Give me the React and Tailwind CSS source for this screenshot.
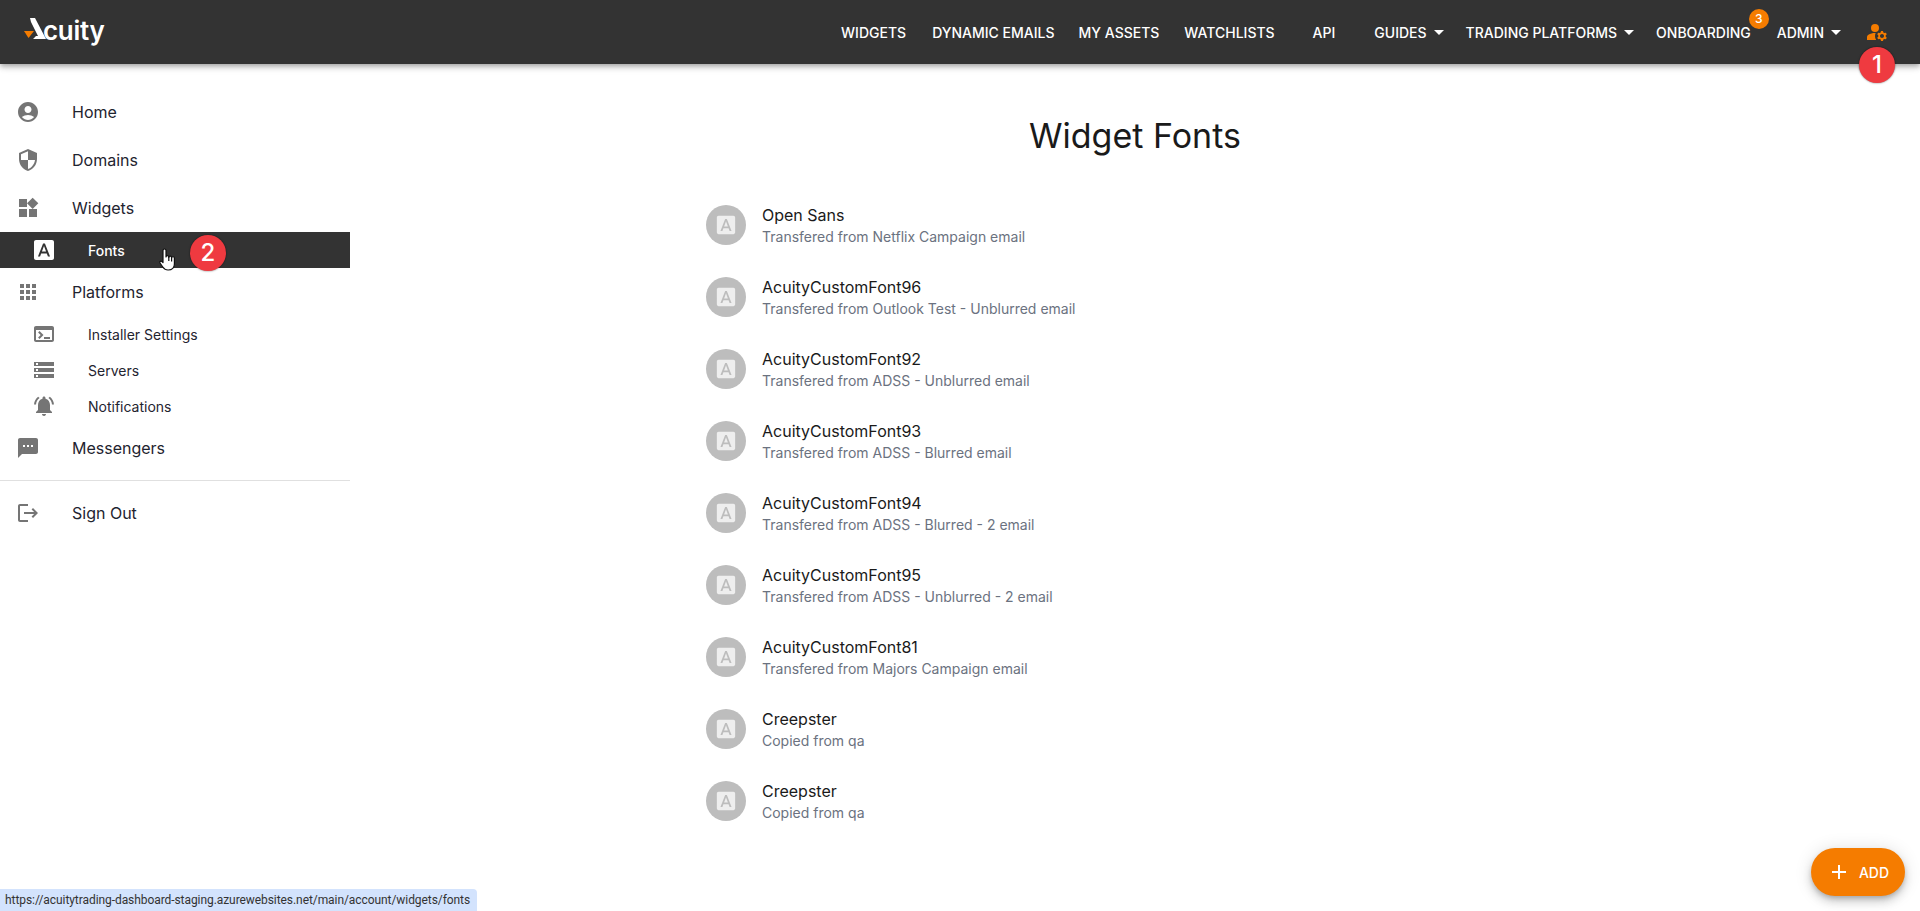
import React from "react";

const ICONS = {
  home: "M12 2C6.48 2 2 6.48 2 12s4.48 10 10 10 10-4.48 10-10S17.52 2 12 2zm0 4c1.93 0 3.5 1.57 3.5 3.5S13.93 13 12 13s-3.5-1.57-3.5-3.5S10.07 6 12 6zm0 14c-2.03 0-4.43-.82-6.14-2.88C7.55 15.8 9.68 15 12 15s4.45.8 6.14 2.12C16.43 19.18 14.03 20 12 20z",
  shield: "M12 1 3 5v6c0 5.55 3.84 10.74 9 12 5.16-1.26 9-6.45 9-12V5l-9-4zm0 10.99h7c-.53 4.12-3.28 7.79-7 8.94V12H5V6.3l7-3.11v8.8z",
  widgets: "M13 13v8h8v-8h-8zM3 21h8v-8H3v8zM3 3v8h8V3H3zm13.66-1.31L11 7.34 16.66 13l5.66-5.66-5.66-5.65z",
  font: "M9.93 13.5h4.14L12 7.98zM20 2H4c-1.1 0-2 .9-2 2v16c0 1.1.9 2 2 2h16c1.1 0 2-.9 2-2V4c0-1.1-.9-2-2-2zm-4.05 16.5l-1.14-3H9.17l-1.12 3H5.96l5.11-13h1.86l5.11 13h-2.09z",
  apps: "M4 8h4V4H4v4zm6 12h4v-4h-4v4zm-6 0h4v-4H4v4zm0-6h4v-4H4v4zm6 0h4v-4h-4v4zm6-10v4h4V4h-4zm-6 4h4V4h-4v4zm6 6h4v-4h-4v4zm0 6h4v-4h-4v4z",
  terminal: "M20 4H4c-1.11 0-2 .9-2 2v12c0 1.1.89 2 2 2h16c1.1 0 2-.9 2-2V6c0-1.1-.89-2-2-2zm0 14H4V8h16v10zm-2-1h-6v-2h6v2zM7.5 17l-1.41-1.41L8.67 13l-2.59-2.59L7.5 9l4 4-4 4z",
  storage: "M2 20h20v-4H2v4zm2-3h2v2H4v-2zM2 4v4h20V4H2zm4 3H4V5h2v2zm-4 7h20v-4H2v4zm2-3h2v2H4v-2z",
  bell: "M7.58 4.08 6.15 2.65C3.75 4.48 2.17 7.3 2.03 10.5h2c.15-2.65 1.51-4.97 3.55-6.42zm12.39 6.42h2c-.15-3.2-1.73-6.02-4.12-7.85l-1.42 1.43c2.02 1.45 3.39 3.77 3.54 6.42zM18 11c0-3.07-1.64-5.64-4.5-6.32V4c0-.83-.67-1.5-1.5-1.5s-1.5.67-1.5 1.5v.68C7.63 5.36 6 7.92 6 11v5l-2 2v1h16v-1l-2-2v-5zm-6 11c.14 0 .27-.01.4-.04.65-.14 1.18-.58 1.44-1.18.1-.24.15-.5.15-.78h-4c.01 1.1.9 2 2.01 2z",
  sms: "M20 2H4c-1.1 0-1.99.9-1.99 2L2 22l4-4h14c1.1 0 2-.9 2-2V4c0-1.1-.9-2-2-2zM9 11H7V9h2v2zm4 0h-2V9h2v2zm4 0h-2V9h2v2z",
  logout: "m17 7-1.41 1.41L18.17 11H8v2h10.17l-2.58 2.58L17 17l5-5zM4 5h8V3H4c-1.1 0-2 .9-2 2v14c0 1.1.9 2 2 2h8v-2H4V5z",
  add: "M19 13h-6v6h-2v-6H5v-2h6V5h2v6h6v2z",
};

function Icon({ name, className }) {
  return (
    <svg viewBox="0 0 24 24" fill="currentColor" className={className}>
      <path d={ICONS[name]} />
    </svg>
  );
}

function ManageAccounts({ className }) {
  return (
    <svg viewBox="0 0 24 24" fill="currentColor" className={className}>
      <path d="M10.67 13.02c-.22-.01-.44-.02-.67-.02-2.42 0-4.68.67-6.61 1.82-.88.52-1.39 1.5-1.39 2.53V20h9.26c-.79-1.13-1.26-2.51-1.26-4 0-1.07.25-2.07.67-2.98z" />
      <circle cx="10" cy="8" r="4" />
      <path d="M20.75 16c0-.22-.03-.42-.06-.63l1.14-1.01-1-1.73-1.45.49c-.32-.27-.68-.48-1.08-.63L18 11h-2l-.3 1.49c-.4.15-.76.36-1.08.63l-1.45-.49-1 1.73 1.14 1.01c-.03.21-.06.41-.06.63s.03.42.06.63l-1.14 1.01 1 1.73 1.45-.49c.32.27.68.48 1.08.63L16 21h2l.3-1.49c.4-.15.76-.36 1.08-.63l1.45.49 1-1.73-1.14-1.01c.03-.21.06-.41.06-.63zM17 18c-1.1 0-2-.9-2-2s.9-2 2-2 2 .9 2 2-.9 2-2 2z" />
    </svg>
  );
}

// mouse pointer sitting over the Fonts row
function HandCursor({ className }) {
  return (
    <svg viewBox="0 0 18 24" className={className} fill="#ffffff" stroke="#111111" strokeWidth="1.2" strokeLinejoin="round">
      <path d="M4 2.5a1.5 1.5 0 0 1 3 0V9a1.4 1.4 0 0 1 2.8 0v.5a1.4 1.4 0 0 1 2.8 0v.5a1.4 1.4 0 0 1 2.8 0V16c0 3.5-2.5 6-6 6H9c-2.5 0-4-1.2-5.2-3L1 15c-.7-1 .6-2.4 1.6-1.6L4 14.6z" />
      <path d="M9.8 9v4M12.6 10v3.5" fill="none" />
    </svg>
  );
}

function Caret() {
  return <span className="ml-[7px] w-0 h-0 border-x-[5px] border-x-transparent border-t-[5px] border-t-white" />;
}

function Callout({ children, className }) {
  return (
    <div className={`absolute w-9 h-9 rounded-full bg-[#ef3a40] text-white text-[24px] font-medium flex items-center justify-center shadow-[0_0_2px_rgba(0,0,0,0.6)] ${className}`}>
      {children}
    </div>
  );
}

function NavItem({ label, caret, className = "" }) {
  return (
    <div className={`flex items-center text-[14px] font-medium text-white uppercase whitespace-nowrap ${className}`}>
      {label}
      {caret && <Caret />}
    </div>
  );
}

function TopRow({ icon, label }) {
  return (
    <div className="h-12 flex items-center pl-4 text-[16px] text-[#1f2430]">
      <Icon name={icon} className="w-6 h-6 mr-8 text-[#757575]" />
      {label}
    </div>
  );
}

function SubRow({ icon, label, active }) {
  return (
    <div className={`h-9 flex items-center pl-8 text-[14px] ${active ? "bg-[#333333] text-white font-medium" : "text-[#1f2430]"}`}>
      <Icon name={icon} className={`w-6 h-6 mr-8 ${active ? "text-white" : "text-[#757575]"}`} />
      {label}
    </div>
  );
}

const FONTS = [
  ["Open Sans", "Transfered from Netflix Campaign email"],
  ["AcuityCustomFont96", "Transfered from Outlook Test - Unblurred email"],
  ["AcuityCustomFont92", "Transfered from ADSS - Unblurred email"],
  ["AcuityCustomFont93", "Transfered from ADSS - Blurred email"],
  ["AcuityCustomFont94", "Transfered from ADSS - Blurred - 2 email"],
  ["AcuityCustomFont95", "Transfered from ADSS - Unblurred - 2 email"],
  ["AcuityCustomFont81", "Transfered from Majors Campaign email"],
  ["Creepster", "Copied from qa"],
  ["Creepster", "Copied from qa"],
];

export default function App() {
  return (
    <div className="h-[911px] relative overflow-hidden bg-white font-['Inter',sans-serif]">
      <header className="relative z-10 h-16 bg-[#333333] flex items-center justify-between pl-6 pr-[31px] shadow-[0_2px_4px_-1px_rgba(0,0,0,0.2),0_4px_5px_0_rgba(0,0,0,0.14),0_1px_10px_0_rgba(0,0,0,0.12)]">
        <div className="flex items-center h-full">
          <svg viewBox="0 0 23 22" className="w-[23px] h-[22px] mt-[-6px]">
            <path d="M6 0h5l11 21H9l3-3h2L7 4z" fill="#ffffff" />
            <path d="M0 13h10l-5.5 7z" fill="#f57c00" />
          </svg>
          <span className="text-[26px] font-semibold text-white tracking-[-0.3px] ml-[-4px] mt-[-4px]">cuity</span>
        </div>
        <nav className="flex items-center">
          <NavItem label="Widgets" />
          <NavItem label="Dynamic Emails" className="ml-[26px]" />
          <NavItem label="My Assets" className="ml-[24px]" />
          <NavItem label="Watchlists" className="ml-[25px]" />
          <NavItem label="API" className="ml-[38px]" />
          <NavItem label="Guides" caret className="ml-[39px]" />
          <NavItem label="Trading Platforms" caret className="ml-[22px]" />
          <div className="relative ml-[22px]">
            <NavItem label="Onboarding" />
            <span className="absolute top-[-13px] right-[-18px] w-5 h-5 rounded-full bg-[#f57c00] text-white text-[12px] font-medium flex items-center justify-center">3</span>
          </div>
          <NavItem label="Admin" caret className="ml-[26px]" />
          <ManageAccounts className="w-6 h-6 ml-[24px] text-[#f57c00]" />
        </nav>
      </header>

      <div className="flex">
        <aside className="w-[350px] shrink-0 pt-6">
          <TopRow icon="home" label="Home" />
          <TopRow icon="shield" label="Domains" />
          <TopRow icon="widgets" label="Widgets" />
          <SubRow icon="font" label="Fonts" active />
          <TopRow icon="apps" label="Platforms" />
          <SubRow icon="terminal" label="Installer Settings" />
          <SubRow icon="storage" label="Servers" />
          <SubRow icon="bell" label="Notifications" />
          <TopRow icon="sms" label="Messengers" />
          <div className="my-2 border-t border-[#e0e0e0]" />
          <TopRow icon="logout" label="Sign Out" />
        </aside>

        <main className="flex-1 flex flex-col items-center">
          <h1 className="mt-[48px] text-[34px] leading-[48px] font-normal text-[#1a1a1a]">Widget Fonts</h1>
          <div className="mt-[29px] w-[890px]">
            {FONTS.map(([name, from], i) => (
              <div key={i} className="h-[72px] flex items-center px-4">
                <div className="w-10 h-10 mr-4 rounded-full bg-[#bdbdbd] flex items-center justify-center">
                  <Icon name="font" className="w-[22px] h-[22px] text-[#eeeeee]" />
                </div>
                <div>
                  <div className="text-[16px] leading-[24px] text-[#1a1a1a]">{name}</div>
                  <div className="text-[14px] leading-[20px] text-[#6b7280]">{from}</div>
                </div>
              </div>
            ))}
          </div>
        </main>
      </div>

      <Callout className="left-[1859px] top-[47px] z-20">1</Callout>
      <Callout className="left-[190px] top-[235px] z-20">2</Callout>
      <HandCursor className="absolute left-[159px] top-[248px] w-[18px] h-6 z-20" />

      <button className="absolute left-[1811px] top-[848px] w-[94px] h-12 rounded-full bg-[#f57c00] text-white text-[14px] font-medium flex items-center justify-center shadow-[0_3px_5px_-1px_rgba(0,0,0,0.2),0_6px_10px_0_rgba(0,0,0,0.14),0_1px_18px_0_rgba(0,0,0,0.12)]">
        <Icon name="add" className="w-6 h-6 mr-2" />
        ADD
      </button>

      <div className="absolute left-0 bottom-0 h-[22px] pl-[5px] pr-[7px] flex items-center rounded-tr-[4px] bg-[#d3e3fd] text-[12px] tracking-[-0.07px] text-[#333333] font-['Roboto',sans-serif]">
        https://acuitytrading-dashboard-staging.azurewebsites.net/main/account/widgets/fonts
      </div>
    </div>
  );
}
